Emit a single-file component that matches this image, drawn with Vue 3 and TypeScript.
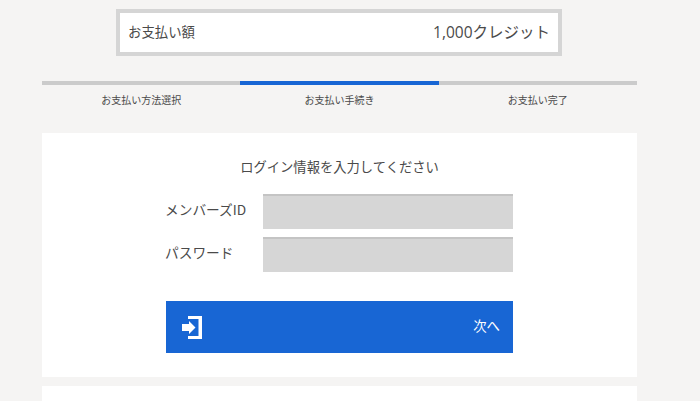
<script setup lang="ts">
const steps = [
  { label: 'お支払い方法選択', active: false },
  { label: 'お支払い手続き', active: true },
  { label: 'お支払い完了', active: false },
]
</script>

<template>
  <div class="page">
    <div class="summary">
      <span>お支払い額</span>
      <span class="amount">1,000クレジット</span>
    </div>
    <ol class="steps">
      <li v-for="s in steps" :key="s.label" class="step" :class="{ active: s.active }">{{ s.label }}</li>
    </ol>
    <section class="card">
      <h2 class="title">ログイン情報を入力してください</h2>
      <div class="form">
        <label class="row"><span class="lbl">メンバーズID</span><input class="field" type="text" /></label>
        <label class="row"><span class="lbl">パスワード</span><input class="field" type="password" /></label>
        <button class="next" type="button">
          <svg class="icon" width="21" height="23" viewBox="0 0 21 23" aria-hidden="true">
            <path fill="#fff" d="M6 0h14v23H6v-3h10.500V3H6z" />
            <path fill="#fff" d="M0 8h7V5l6.500 6.500L7 18v-3H0z" />
          </svg>
          <span class="next-text">次へ</span>
        </button>
      </div>
    </section>
    <section class="card2"></section>
  </div>
</template>

<style>
html, body { margin: 0; background: #f5f4f3; }
</style>

<style scoped>
.page {
  width: 700px;
  height: 401px;
  overflow: hidden;
  box-sizing: border-box;
  padding: 9px 63px 0 42px;
  background: #f5f4f3;
  color: #4a4a4a;
  font-family: "Noto Sans CJK JP", "Open Sans", sans-serif;
}
.summary {
  box-sizing: border-box;
  width: 446px;
  height: 47px;
  margin: 0 0 0 74px;
  padding: 0 8px 3px 8px;
  border: 4px solid #d5d5d5;
  background: #fff;
  display: flex;
  align-items: center;
  justify-content: space-between;
  font-size: 13.4px;
}
.amount { font-size: 15.5px; font-family: "Open Sans", "Noto Sans CJK JP", sans-serif; }
.steps {
  list-style: none;
  margin: 25px 0 0;
  padding: 0;
  display: grid;
  grid-template-columns: repeat(3, 1fr);
}
.step {
  border-top: 4px solid #cbcbcb;
  padding-top: 7px;
  height: 41px;
  text-align: center;
  font-size: 10px;
  line-height: 15px;
}
.step.active { border-top-color: #1866d4; }
.card {
  height: 244px;
  box-sizing: border-box;
  padding-top: 24px;
  background: #fff;
}
.title {
  margin: 0;
  font-weight: 400;
  font-size: 13.3px;
  line-height: 20px;
  text-align: center;
}
.form {
  width: 347px;
  margin: 17px 0 0 124px;
  display: flex;
  flex-direction: column;
}
.row {
  display: flex;
  align-items: center;
  height: 35px;
  margin-bottom: 8px;
}
.lbl { width: 97px; margin-left: -1px; margin-right: 1px; font-size: 13.7px; padding-bottom: 5px; }
.field {
  width: 250px;
  height: 35px;
  box-sizing: border-box;
  border: 0;
  border-top: 2px solid #c4c4c4;
  background: #d6d6d6;
  padding: 0 8px;
}
.next {
  margin-top: 21px;
  height: 52px;
  border: 0;
  padding: 0 13px 0 16px;
  background: #1866d4;
  color: #fff;
  display: flex;
  align-items: center;
  justify-content: space-between;
  font: inherit;
  font-size: 13.4px;
}
.next-text { padding-bottom: 4px; }
.icon { margin-top: 1px; }
.card2 {
  height: 40px;
  margin-top: 9px;
  background: #fff;
}
</style>
